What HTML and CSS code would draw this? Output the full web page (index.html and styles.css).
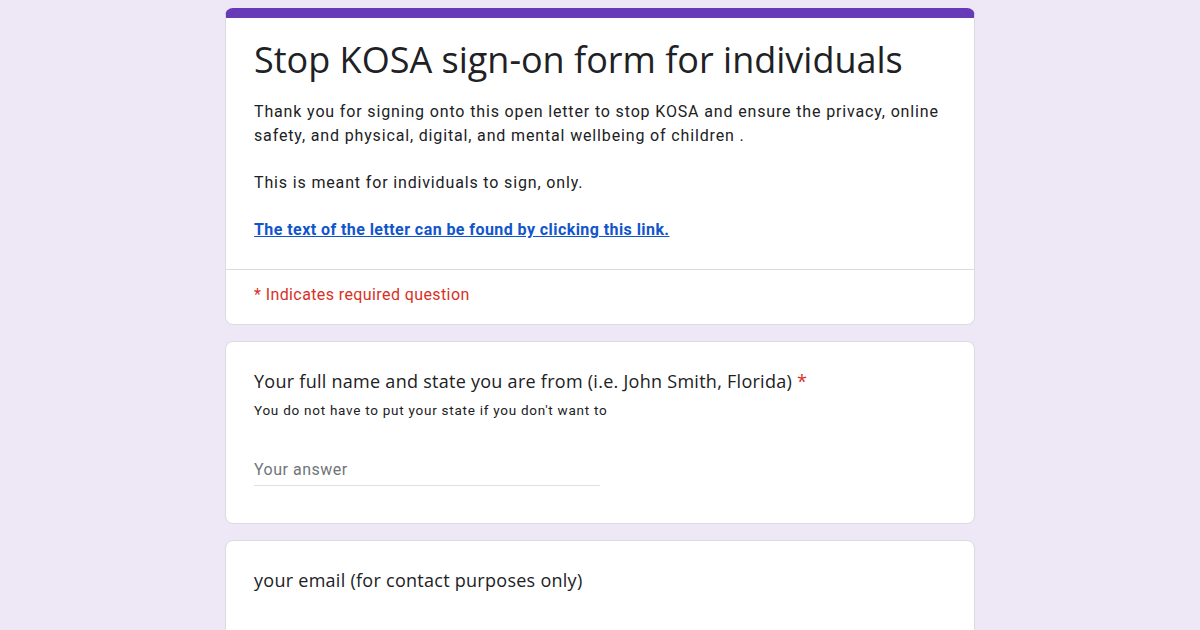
FILE: index.html
```html
<!DOCTYPE html>
<html lang="en">
<head>
  <meta charset="UTF-8" />
  <meta name="viewport" content="width=device-width, initial-scale=1.0"/>
  <title>Stop KOSA sign-on form for individuals</title>
  <link rel="stylesheet" href="styles.css">
</head>
<body>
  <div class="form">
    <div class="card header-card">
      <div class="header-body">
        <h1 class="form-title">Stop KOSA sign-on form for individuals</h1>
        <p class="desc">Thank you for signing onto this open letter to stop KOSA and ensure the privacy, online safety, and physical, digital, and mental wellbeing of children .</p>
        <p class="desc">This is meant for individuals to sign, only.</p>
        <p class="desc"><a class="letter-link" href="#">The text of the letter can be found by clicking this link.</a></p>
      </div>
      <div class="required-note">* Indicates required question</div>
    </div>

    <div class="card question">
      <div class="q-title">Your full name and state you are from (i.e. John Smith, Florida) <span class="star">*</span></div>
      <div class="q-help">You do not have to put your state if you don't want to</div>
      <div class="answer">Your answer</div>
    </div>

    <div class="card question">
      <div class="q-title">your email (for contact purposes only)</div>
      <div class="q-help"></div>
      <div class="answer">Your answer</div>
    </div>
  </div>
</body>
</html>
```

FILE: styles.css
```css
body {
  margin: 0;
  padding: 0;
  background: #ede7f6;
  font-family: Roboto, Arial, sans-serif;
  color: #202124;
}
.form {
  width: 750px;
  margin: 0 auto;
  padding-top: 8px;
}
.card {
  background: #fff;
  border: 1px solid #dadce0;
  border-radius: 8px;
  margin-bottom: 16px;
}
.header-card {
  border-top: 10px solid #673ab7;
}
.header-body {
  padding: 18px 28px 27px;
  border-bottom: 1px solid #dadce0;
}
.form-title {
  font-family: "Open Sans", Roboto, sans-serif;
  font-weight: 400;
  font-size: 36px;
  line-height: 48px;
  margin: 0 0 16px;
  letter-spacing: 0;
}
.desc {
  font-size: 16px;
  line-height: 24px;
  letter-spacing: 0.85px;
  margin: 0 0 23px;
}
.desc:last-child {
  margin-bottom: 0;
}
.letter-link {
  color: #1155cc;
  font-weight: 700;
  letter-spacing: 0.43px;
  text-decoration: underline;
}
.required-note {
  color: #d93025;
  font-size: 16px;
  line-height: 20px;
  letter-spacing: 0.4px;
  padding: 15px 28px 19px;
}
.question {
  padding: 26px 28px 37px;
}
.q-title {
  font-family: "Open Sans", Roboto, sans-serif;
  font-size: 18px;
  line-height: 26px;
  letter-spacing: 0.27px;
}
.star {
  color: #d93025;
}
.q-help {
  font-size: 13.5px;
  letter-spacing: 0.74px;
  line-height: 18px;
  min-height: 18px;
  margin-top: 7px;
}
.answer {
  width: 50%;
  margin-top: 41px;
  padding-bottom: 6px;
  border-bottom: 1px solid #e0e0e0;
  font-size: 16px;
  letter-spacing: 0.5px;
  color: #70757a;
}
```
